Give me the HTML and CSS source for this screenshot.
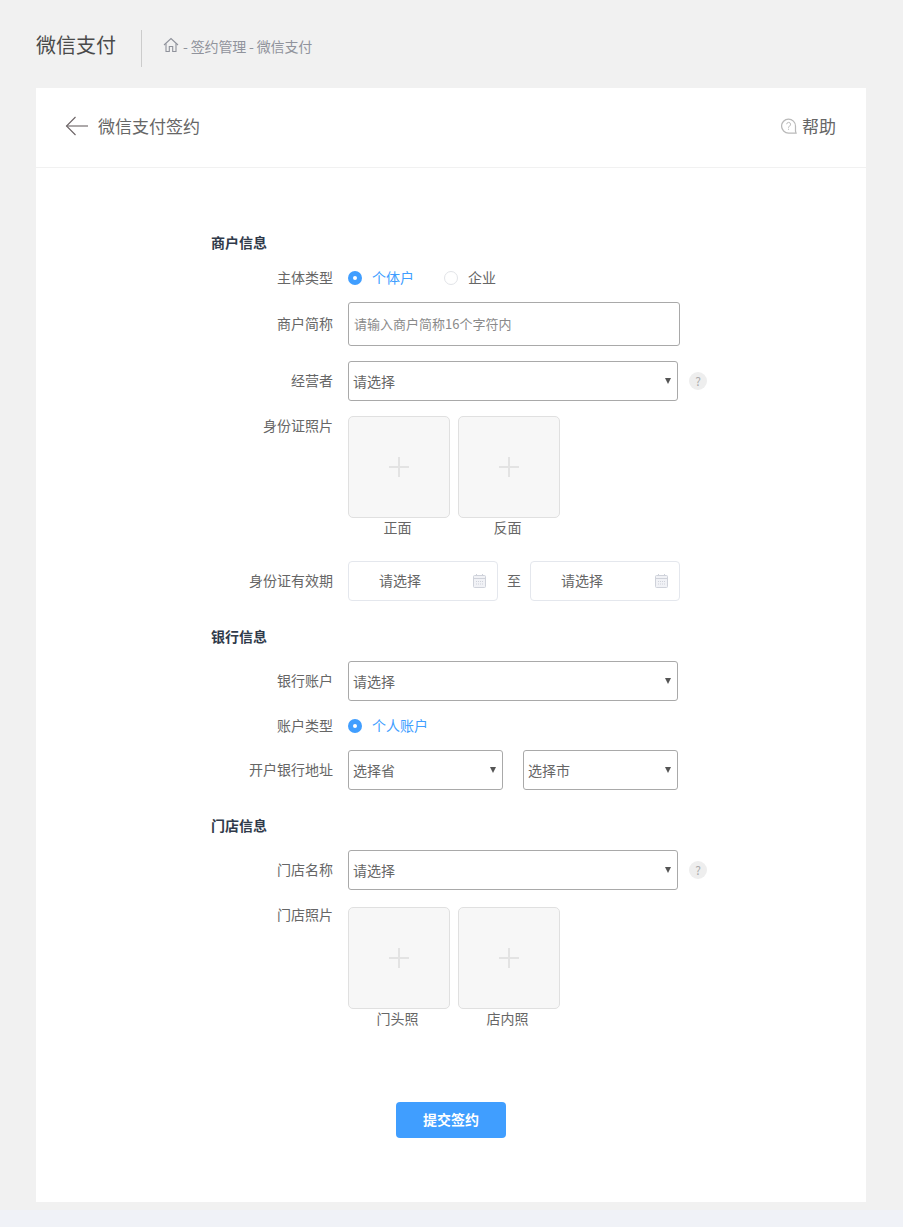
FILE: index.html
```html
<!DOCTYPE html>
<html lang="zh-CN">
<head>
<meta charset="utf-8">
<title>微信支付签约</title>
<link rel="stylesheet" href="styles.css">
</head>
<body>
<div class="page">
  <header class="top">
    <h1 class="top-title">微信支付</h1>
    <nav class="crumbs">
      <svg class="home" width="16" height="16" viewBox="0 0 16 16" fill="none" stroke="#8f929b" stroke-width="1.1"><path d="M1 8 8 1.5 15 8"/><path d="M3 6.5V14.5H6.3V9.5H9.7V14.5H13V6.5"/></svg>
      <span>- 签约管理 - 微信支付</span>
    </nav>
  </header>
  <main class="card">
    <div class="card-head">
      <div class="back">
        <svg width="24" height="20" viewBox="0 0 24 20" fill="none" stroke="#6b6365" stroke-width="1.1"><path d="M10.5 1 1.5 10 10.5 19"/><path d="M1.5 10H23"/></svg>
        <span>微信支付签约</span>
      </div>
      <div class="help">
        <svg width="16" height="16" viewBox="0 0 17 17" fill="none" stroke="#b9b9b9" stroke-width="1.3"><path d="M16 16H8A7.4 7.4 0 1 1 15.4 8.5V14Z"/><path d="M6 6.6A2.1 2.1 0 1 1 8.6 8.8C8 9.1 8 9.6 8 10.4" stroke-width="1"/><path d="M8 11.4V12.6" stroke-width="1"/></svg>
        <span>帮助</span>
      </div>
    </div>
    <form>
      <div class="fields">
        <h2 class="section first">商户信息</h2>
        <div class="row row-radio r-type">
          <label class="lab">主体类型</label>
          <span class="radio on"></span><span class="radio-text on-text">个体户</span>
          <span class="radio off"></span><span class="radio-text">企业</span>
        </div>
        <div class="row r-name">
          <label class="lab">商户简称</label>
          <input class="text" type="text" placeholder="请输入商户简称16个字符内">
        </div>
        <div class="row r-owner">
          <label class="lab">经营者</label>
          <span class="sel-wrap wide"><select class="sel"><option>请选择</option></select></span>
          <span class="tip">?</span>
        </div>
        <div class="row row-top r-id">
          <label class="lab lab-top">身份证照片</label>
          <div class="uploads">
            <div class="up"><div class="box"><span class="plus"></span></div><span class="cap">正面</span></div>
            <div class="up"><div class="box"><span class="plus"></span></div><span class="cap">反面</span></div>
          </div>
        </div>
        <div class="row r-date">
          <label class="lab">身份证有效期</label>
          <div class="date"><span>请选择</span>
            <svg width="13" height="14" viewBox="0 0 13 14" fill="#f1f2f6" stroke="#cfd2da"><rect x=".5" y="1.5" width="12" height="12" rx="1"/><path d="M.5 4.5h12"/><path d="M3 7.5h7M3 10h7" stroke-dasharray="1 1"/><path d="M3.5 0v2M9.5 0v2"/></svg>
          </div>
          <span class="to">至</span>
          <div class="date"><span>请选择</span>
            <svg width="13" height="14" viewBox="0 0 13 14" fill="#f1f2f6" stroke="#cfd2da"><rect x=".5" y="1.5" width="12" height="12" rx="1"/><path d="M.5 4.5h12"/><path d="M3 7.5h7M3 10h7" stroke-dasharray="1 1"/><path d="M3.5 0v2M9.5 0v2"/></svg>
          </div>
        </div>
        <h2 class="section s-bank">银行信息</h2>
        <div class="row r-bank">
          <label class="lab">银行账户</label>
          <span class="sel-wrap wide"><select class="sel"><option>请选择</option></select></span>
        </div>
        <div class="row row-radio r-acc">
          <label class="lab">账户类型</label>
          <span class="radio on"></span><span class="radio-text on-text">个人账户</span>
        </div>
        <div class="row r-addr">
          <label class="lab">开户银行地址</label>
          <span class="sel-wrap half"><select class="sel"><option>选择省</option></select></span>
          <span class="sel-wrap half next"><select class="sel"><option>选择市</option></select></span>
        </div>
        <h2 class="section s-store">门店信息</h2>
        <div class="row r-store">
          <label class="lab">门店名称</label>
          <span class="sel-wrap wide"><select class="sel"><option>请选择</option></select></span>
          <span class="tip">?</span>
        </div>
        <div class="row row-top r-photo">
          <label class="lab lab-photo">门店照片</label>
          <div class="uploads clip">
            <div class="up"><div class="box"><span class="plus"></span></div><span class="cap">门头照</span></div>
            <div class="up"><div class="box"><span class="plus"></span></div><span class="cap">店内照</span></div>
          </div>
        </div>
      </div>
      <div class="actions"><button class="submit" type="button">提交签约</button></div>
    </form>
  </main>
</div>
</body>
</html>
```
FILE: styles.css
```css
* { box-sizing: border-box; }
html, body { margin: 0; padding: 0; }
body {
  background: #f0f2f7;
  font-family: "Noto Sans CJK SC", "Noto Sans", sans-serif;
  font-size: 14px;
  color: #666;
  height: 1227px;
  overflow: hidden;
}
.page { background: #f1f1f1; height: 1210px; padding: 0 37px 0 36px; }

.top { height: 88px; display: flex; align-items: center; padding-top: 9px; }
.top-title { margin: 0; width: 106px; height: 37px; line-height: 30px; font-size: 20px; font-weight: 400; color: #4a4a4a; border-right: 1px solid #ccc; }
.crumbs { display: flex; align-items: center; gap: 4px; padding: 0 0 5px 21px; color: #90939c; font-size: 14px; letter-spacing: -.15px; }
.home { display: block; margin-top: -3px; }

.card { background: #fff; height: 1114px; }
.card-head { height: 80px; border-bottom: 1px solid #f1f1f1; display: flex; justify-content: space-between; align-items: center; padding: 0 30px 4px 29px; }
.back { display: flex; align-items: center; gap: 9px; font-size: 17px; color: #666; }
.help { display: flex; align-items: center; gap: 5px; font-size: 17px; color: #666; }
.back svg, .help svg { display: block; }

.fields { padding-left: 175px; }
.section { margin: 0; padding-bottom: 1px; font-size: 14px; line-height: 20px; font-weight: 700; color: #303a4a; }
.section.first { margin-top: 64px; }
.s-bank { margin-top: 25px; }
.s-store { margin-top: 25px; }

.row { display: flex; align-items: center; }
.row-top { align-items: flex-start; }
.lab { width: 122px; text-align: right; margin-right: 15px; color: #666; line-height: 20px; padding-bottom: 2px; flex: none; }
.lab-top { margin-top: -1px; }
.lab-photo { margin-top: -3px; }

.r-type { margin-top: 15px; height: 20px; }
.r-name { margin-top: 14px; }
.r-owner { margin-top: 15px; }
.r-id { margin-top: 15px; }
.r-date { margin-top: 0; }
.r-bank { margin-top: 14px; }
.r-acc { margin-top: 15px; height: 20px; }
.r-addr { margin-top: 14px; }
.r-store { margin-top: 14px; }
.r-photo { margin-top: 17px; }

.radio { width: 14px; height: 14px; border-radius: 50%; flex: none; }
.radio.on { background: #409eff; position: relative; }
.radio.on::after { content: ""; position: absolute; left: 5px; top: 5px; width: 4px; height: 4px; background: #fff; border-radius: 50%; }
.radio.off { border: 1px solid #e2e4e8; background: #fff; margin-left: 30px; }
.radio-text { margin-left: 10px; line-height: 20px; padding-bottom: 2px; color: #666; }
.on-text { color: #409eff; }

.text { width: 332px; height: 44px; border: 1px solid #a9a9a9; border-radius: 3px; padding: 0 5px 2px; font: inherit; font-size: 13px; color: #666; background: #fff; outline: none; }
.text::placeholder { color: #8a8a8a; opacity: 1; }

.sel-wrap { display: block; position: relative; height: 40px; flex: none; }
.sel-wrap::after { content: ""; position: absolute; right: 7px; top: 17px; width: 0; height: 0; border: 3px solid transparent; border-top: 6px solid #555; border-bottom: 0; pointer-events: none; }
.sel { display: block; width: 100%; height: 40px; appearance: none; border: 1px solid #a9a9a9; border-radius: 3px; background: #fff; font: inherit; font-size: 14px; color: #666; padding: 0 4px; }
.wide { width: 330px; }
.half { width: 155px; }
.next { margin-left: 20px; }

.tip { width: 18px; height: 18px; margin-left: 11px; border-radius: 50%; background: #eee; color: #aaa; font-size: 12px; line-height: 18px; text-align: center; flex: none; }

.uploads { display: flex; gap: 8px; height: 145px; }
.uploads.clip { height: 119px; overflow: hidden; }
.up { width: 102px; display: flex; flex-direction: column; align-items: center; }
.box { width: 102px; height: 102px; border: 1px solid #e0e0e0; border-radius: 5px; background: #f7f7f7; position: relative; flex: none; }
.plus { position: absolute; left: 40px; top: 40px; width: 20px; height: 20px; background: linear-gradient(#e3e3e3, #e3e3e3) center / 20px 2px no-repeat, linear-gradient(#e3e3e3, #e3e3e3) center / 2px 20px no-repeat; }
.cap { line-height: 18px; color: #666; margin-left: -3px; }

.date { width: 150px; height: 40px; border: 1px solid #e4e7ed; border-radius: 4px; display: flex; align-items: center; justify-content: space-between; padding: 0 11px 0 30px; background: #fff; color: #666; }
.date span { padding-bottom: 2px; }
.date svg { display: block; }
.to { width: 32px; text-align: center; color: #666; padding-bottom: 2px; }

.actions { margin-top: 76px; display: flex; justify-content: center; }
.submit { width: 110px; height: 36px; border: 0; border-radius: 4px; background: #409eff; color: #fff; font: inherit; font-size: 14px; font-weight: 700; padding: 0 0 2px; }
```
